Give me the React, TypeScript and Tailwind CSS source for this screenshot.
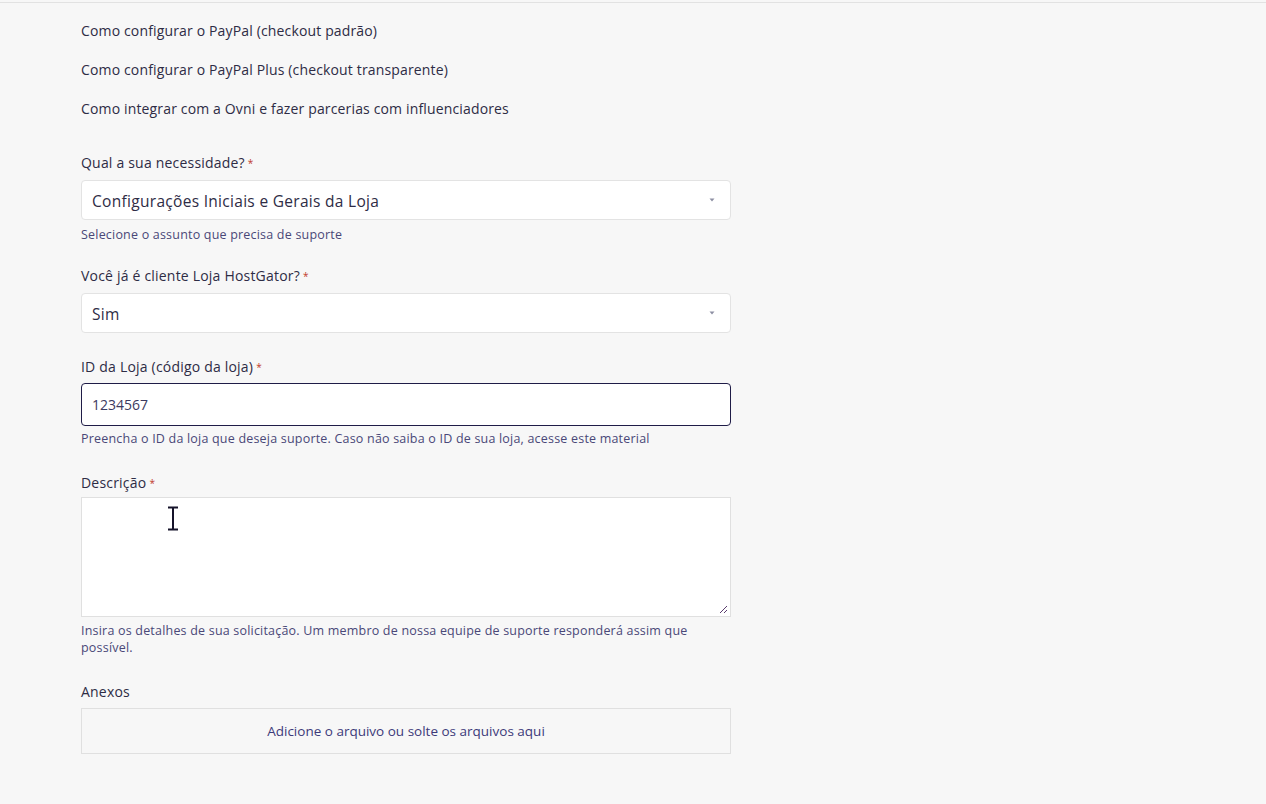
import React from 'react';

const font = { fontFamily: '"Open Sans", "Noto Sans", sans-serif' };

function Label({ children, required }: { children: React.ReactNode; required?: boolean }) {
  return (
    <label className="block text-[14px] leading-5 tracking-[0.2px] text-[#2e2c45]">
      {children}
      {required && <span className="ml-[3px] align-top text-[10px] text-[#c0392b]">*</span>}
    </label>
  );
}

function Help({ children, className = 'mt-[6px]' }: { children: React.ReactNode; className?: string }) {
  return (
    <p className={`${className} text-[12.5px] leading-[17px] tracking-[0.2px] text-[#4a4878]`}>{children}</p>
  );
}

function Caret() {
  return (
    <svg width="8" height="6" viewBox="0 0 8 6" className="shrink-0">
      <path d="M1.5 1.5h5L4 4.5z" fill="#8d8fa3" />
    </svg>
  );
}

function Select({ value }: { value: string }) {
  return (
    <div className="mt-[7px] flex h-10 items-center justify-between rounded-[4px] border border-[#e3e3e3] bg-white pl-[10px] pr-[14px]">
      <span className="pt-[3px] text-[15.5px] tracking-[0.3px] text-[#2e2c45]">{value}</span>
      <Caret />
    </div>
  );
}

export default function App() {
  return (
    <div className="min-h-[804px] w-full bg-[#f7f7f7]" style={font}>
      <div className="h-[3px] border-b border-[#e2e2e2] bg-[#f7f7f7]" />
      <div className="w-[731px] pl-[81px] pt-[18px]">
        <ul className="flex flex-col gap-[19px] text-[14px] leading-5 tracking-[0.15px] text-[#2e2c45]">
          <li>Como configurar o PayPal (checkout padrão)</li>
          <li>Como configurar o PayPal Plus (checkout transparente)</li>
          <li>Como integrar com a Ovni e fazer parcerias com influenciadores</li>
        </ul>

        <div className="mt-[34px]">
          <Label required>Qual a sua necessidade?</Label>
          <Select value="Configurações Iniciais e Gerais da Loja" />
          <Help>Selecione o assunto que precisa de suporte</Help>
        </div>

        <div className="mt-[23px]">
          <Label required>Você já é cliente Loja HostGator?</Label>
          <Select value="Sim" />
        </div>

        <div className="mt-[24px]">
          <Label required>ID da Loja (código da loja)</Label>
          <div className="mt-[6px] flex h-[43px] items-center rounded-[4px] border border-[#1f1c47] bg-white px-[10px]">
            <span className="text-[14px] text-[#3c3a60]">1234567</span>
          </div>
          <Help className="mt-[4px]">
            Preencha o ID da loja que deseja suporte. Caso não saiba o ID de sua loja, acesse este material
          </Help>
        </div>

        <div className="mt-[26px]">
          <Label required>Descrição</Label>
          <div className="relative mt-[4px] h-[120px] border border-[#e0e0e0] bg-white">
            <svg className="absolute left-[84px] top-[8px]" width="14" height="25" viewBox="0 0 14 25">
              <path d="M2 1.5h10M7 1.5v22M2 23.5h10" stroke="#15132a" strokeWidth="2" fill="none" />
            </svg>
            <svg className="absolute bottom-[2px] right-[2px]" width="10" height="10" viewBox="0 0 10 10">
              <path d="M9 2L2 9M9 6L6 9" stroke="#5a3d6e" strokeWidth="1" />
            </svg>
          </div>
          <Help className="mt-[5px]">
            Insira os detalhes de sua solicitação. Um membro de nossa equipe de suporte responderá assim que possível.
          </Help>
        </div>

        <div className="mt-[26px]">
          <Label>Anexos</Label>
          <div className="mt-[6px] flex h-[46px] items-center justify-center border border-[#e0e0e0] bg-[#f7f7f7]">
            <span className="text-[13.5px] text-[#3d3a7a]">Adicione o arquivo ou solte os arquivos aqui</span>
          </div>
        </div>
      </div>
    </div>
  );
}
